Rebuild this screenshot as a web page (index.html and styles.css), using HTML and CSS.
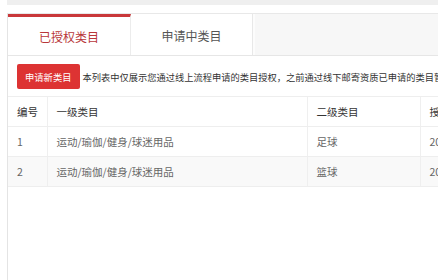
FILE: index.html
```html
<!DOCTYPE html>
<html lang="zh-CN">
<head>
<meta charset="utf-8">
<title>类目授权</title>
<link rel="stylesheet" href="styles.css">
</head>
<body>
<div class="top-band"></div>
<div class="panel">
  <div class="tabs">
    <div class="tab tab-active">已授权类目</div>
    <div class="tab">申请中类目</div>
    <div class="tab-rest"></div>
  </div>
  <div class="toolbar">
    <button class="btn-apply" type="button">申请新类目</button>
    <span class="notice">本列表中仅展示您通过线上流程申请的类目授权，之前通过线下邮寄资质已申请的类目暂不在此展示</span>
  </div>
  <table class="grid">
    <colgroup>
      <col class="c-no">
      <col class="c-first">
      <col class="c-second">
      <col class="c-date">
    </colgroup>
    <thead>
      <tr><th>编号</th><th>一级类目</th><th>二级类目</th><th>授权时间</th></tr>
    </thead>
    <tbody>
      <tr><td>1</td><td>运动/瑜伽/健身/球迷用品</td><td>足球</td><td>2018-01-01</td></tr>
      <tr class="striped"><td>2</td><td>运动/瑜伽/健身/球迷用品</td><td>篮球</td><td>2018-01-01</td></tr>
    </tbody>
  </table>
</div>
</body>
</html>
```

FILE: styles.css
```css
html, body {
  margin: 0;
  padding: 0;
}
body {
  width: 438px;
  height: 280px;
  overflow: hidden;
  background: #ffffff;
  font-family: "Noto Sans CJK SC", "Noto Sans", "Liberation Sans", sans-serif;
  color: #333;
}
.top-band {
  height: 5px;
  margin-left: 7px;
  background: #efefef;
  margin-bottom: 8px;
}
.panel {
  margin-left: 7px;
  border-left: 1px solid #e4e4e4;
  border-top: 1px solid #e8e8e8;
  height: 267px;
  box-sizing: border-box;
}
.tabs {
  display: flex;
  height: 42px;
  box-sizing: border-box;
  border-bottom: 1px solid #e6e6e6;
  background: #f7f7f7;
}
.tab {
  width: 122px;
  flex: none;
  display: flex;
  align-items: center;
  justify-content: center;
  background: #fff;
  font-size: 12px;
  color: #555;
  border-right: 1px solid #e8e8e8;
  box-sizing: border-box;
  padding-top: 2px;
}
.tab-active {
  width: 123px;
  border-top: 3px solid #c9383a;
  color: #b8373a;
  padding-top: 0;
  border-right: 1px solid #ececec;
}
.tab-rest {
  flex: 1;
  border-left: 2px solid #fcfcfc;
}
.toolbar {
  display: flex;
  align-items: center;
  padding: 8px 0 7px 9px;
  white-space: nowrap;
}
.btn-apply {
  height: 25px;
  padding: 0 8px;
  border: none;
  border-radius: 2px;
  background: #dd3333;
  color: #fff;
  font-family: inherit;
  font-size: 9.3px;
  flex: none;
}
.notice {
  margin-left: 3px;
  font-size: 9.25px;
  color: #333;
}
.grid {
  border-collapse: collapse;
  table-layout: fixed;
  width: 612px;
  font-size: 10.5px;
}
.c-no { width: 39px; }
.c-first { width: 260px; }
.c-second { width: 113px; }
.c-date { width: 200px; }
.grid th, .grid td {
  height: 30px;
  box-sizing: border-box;
  padding: 0 9px;
  text-align: left;
  font-weight: normal;
  border-top: 1px solid #eeeeee;
  border-bottom: 1px solid #eeeeee;
  border-left: 1px solid #efefef;
  white-space: nowrap;
  overflow: hidden;
}
.grid th:first-child, .grid td:first-child {
  border-left: none;
}
.grid th {
  color: #333;
}
.grid td {
  color: #666;
}
.grid tr.striped td {
  background: #f9f9f9;
}
```
